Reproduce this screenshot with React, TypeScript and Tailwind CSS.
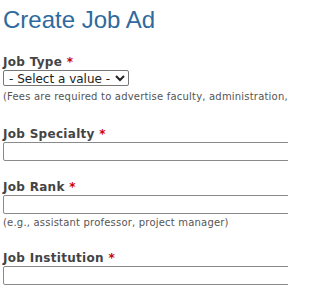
import React from "react";

function Label({ text, className = "" }: { text: string; className?: string }) {
  return (
    <div className={"text-[12px] leading-[16px] font-bold tracking-[0.3px] text-[#444444] " + className}>
      {text} <span className="text-[#cc0000]">*</span>
    </div>
  );
}

export default function App() {
  return (
    <div className="w-[288px] h-[288px] overflow-hidden bg-white pl-[3px] font-['DejaVu_Sans',Verdana,sans-serif]">
      <h1 className="pt-[6px] text-[24px] leading-[28px] font-normal text-[#2f6a9e] font-['Liberation_Sans',Arial,sans-serif]">
        Create Job Ad
      </h1>
      <Label text="Job Type" className="mt-[20px]" />
      <select className="block w-[126px] h-[16px] border border-[#767676] rounded-[2px] bg-white text-[12px] leading-[14px] text-[#222] px-[1px]">
        <option>- Select a value -</option>
      </select>
      <div className="mt-[4px] text-[10px] leading-[14px] tracking-[0.2px] text-[#555] whitespace-nowrap">
        (Fees are required to advertise faculty, administration,
      </div>
      <Label text="Job Specialty" className="mt-[22px]" />
      <input className="block w-[300px] h-[19px] border border-[#8a8a8a] rounded-[2px] bg-white" />
      <Label text="Job Rank" className="mt-[18px]" />
      <input className="block w-[300px] h-[19px] border border-[#8a8a8a] rounded-[2px] bg-white" />
      <div className="mt-[2px] text-[10px] leading-[14px] tracking-[0.2px] text-[#555] whitespace-nowrap">
        (e.g., assistant professor, project manager)
      </div>
      <Label text="Job Institution" className="mt-[20px]" />
      <input className="block w-[300px] h-[19px] border border-[#8a8a8a] rounded-[2px] bg-white" />
    </div>
  );
}
